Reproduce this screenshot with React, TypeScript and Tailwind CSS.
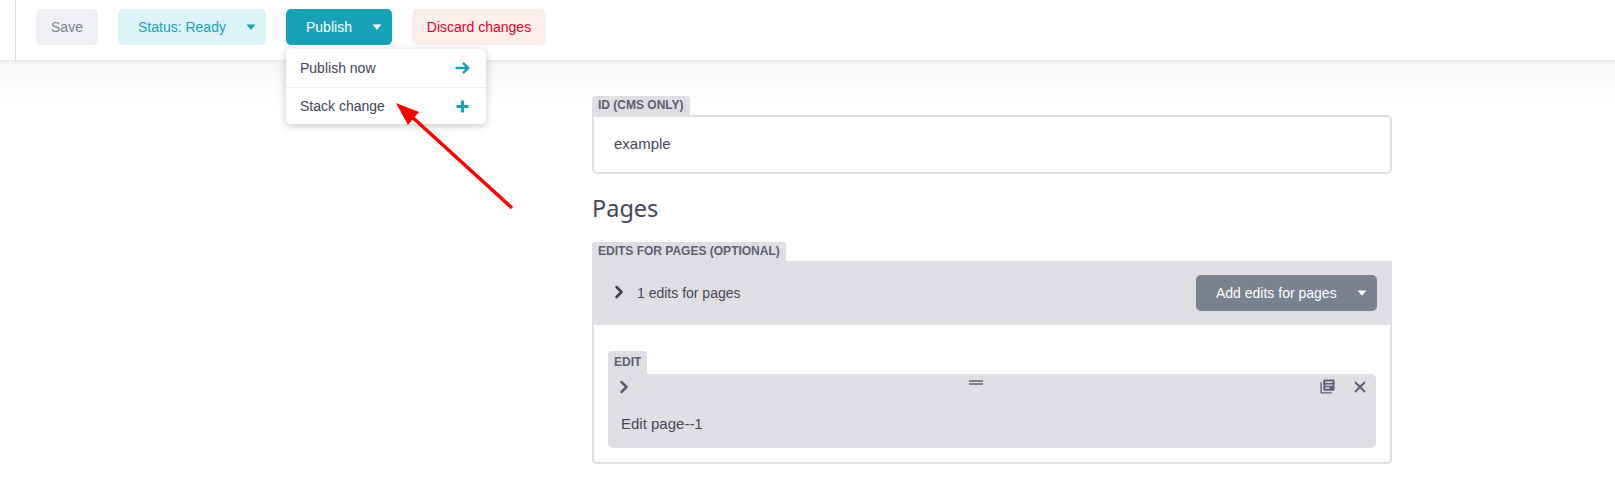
import React from 'react';
import { ChevronRight, X } from 'lucide-react';

const Caret = ({ className }: { className: string }) => (
  <svg viewBox="0 0 10 6" className={`w-[10px] h-[6px] ${className}`}>
    <path d="M0.5 0.5h9L5 5.7z" fill="currentColor" />
  </svg>
);

const Label = ({ children }: { children: React.ReactNode }) => (
  <div className="w-fit h-[19px] px-[6px] bg-[#dfdfe3] rounded-t-[3px] text-[12px] leading-[19px] font-bold text-[#5d5e73]">
    {children}
  </div>
);

export default function App() {
  return (
    <div className="relative w-[1615px] h-[483px] overflow-hidden bg-white font-['Liberation_Sans',sans-serif] text-[14px] text-[#45465a]">
      {/* top toolbar */}
      <div className="relative z-10 h-[60px] bg-white shadow-[0_1px_4px_rgba(0,0,0,0.08)] pl-[15px]">
        <div className="h-full border-l border-[#dfdfe3] pl-[20px] pt-[9px] flex items-start">
          <button className="w-[62px] h-[36px] rounded-[5px] bg-[#eff0f4] text-[#798291]">Save</button>
          <button className="ml-[20px] w-[148px] h-[36px] rounded-[5px] bg-[#ddf5f9] text-[#17a2b8] flex items-center pl-[20px]">
            Status: Ready
            <Caret className="ml-auto mr-[10px] text-[#17a2b8]" />
          </button>
          <div className="relative ml-[20px]">
            <button className="w-[106px] h-[36px] rounded-[5px] bg-[#17a2b8] text-white flex items-center pl-[20px]">
              Publish
              <Caret className="ml-auto mr-[10px] text-white" />
            </button>
            <div className="absolute left-0 top-[40px] w-[200px] h-[75px] rounded-[5px] bg-white shadow-[0_2px_9px_rgba(0,0,0,0.22)]">
              <div className="h-[39px] pl-[14px] pr-[16px] border-b border-[#eff0f4] flex items-center justify-between">
                Publish now
                <svg viewBox="0 0 15 12" className="w-[15px] h-[12px] text-[#17a2b8]" fill="none" stroke="currentColor" strokeWidth="2.4">
                  <path d="M0.5 6h12.500M8 0.800 13.200 6 8 11.200" />
                </svg>
              </div>
              <div className="h-[36px] pl-[14px] pr-[16px] flex items-center justify-between">
                Stack change
                <svg viewBox="0 0 13 13" className="w-[13px] h-[13px] mr-[1px] text-[#17a2b8]" fill="none" stroke="currentColor" strokeWidth="3.2">
                  <path d="M6.500 0.500v12M0.500 6.500h12" />
                </svg>
              </div>
            </div>
          </div>
          <button className="ml-[20px] w-[134px] h-[36px] rounded-[5px] bg-[#fcefea] text-[#e4002b]">Discard changes</button>
        </div>
      </div>

      {/* editor column */}
      <div className="bg-gradient-to-b from-[#f5f5f5] to-white h-[44px]" />
      <div className="w-[800px] ml-[592px] -mt-[8px]">
        <Label>ID (CMS ONLY)</Label>
        <div className="h-[59px] border-2 border-[#dfdfe3] rounded-b-[5px] rounded-tr-[5px] flex items-center pl-[20px] text-[15px]">
          example
        </div>
        <h2 className="mt-[17px] h-[34px] text-[23.5px] leading-[34px] font-['Noto_Sans',sans-serif]">Pages</h2>
        <div className="mt-[17px]">
          <Label>EDITS FOR PAGES (OPTIONAL)</Label>
          <div className="h-[203px] border-2 border-t-0 border-[#dfdfe3] rounded-b-[5px]">
            <div className="h-[64px] -mx-[2px] bg-[#dfdfe3] flex items-center pl-[20px] pr-[15px] rounded-tr-[5px]">
              <ChevronRight className="w-[20px] h-[20px] -ml-[3px] -mt-[2px] text-[#3d3e50]" strokeWidth={3} />
              <span className="ml-[8px]">1 edits for pages</span>
              <button className="ml-auto w-[181px] h-[36px] rounded-[5px] bg-[#798291] text-white flex items-center pl-[20px]">
                Add edits for pages
                <Caret className="ml-auto mr-[10px] text-white" />
              </button>
            </div>
            <div className="pl-[14px] pr-[14px] pt-[26px]">
              <div className="w-fit h-[23px] px-[6px] bg-[#dfdfe3] rounded-t-[3px] text-[12px] leading-[23px] font-bold text-[#5d5e73]">
                EDIT
              </div>
              <div className="relative h-[74px] bg-[#dfdfe3] rounded-b-[5px] rounded-tr-[5px]">
                <ChevronRight className="absolute left-[6px] top-[3px] w-[20px] h-[20px] text-[#5d5e73]" strokeWidth={3} />
                <div className="absolute left-[361px] top-[6px] w-[14px] h-[5px] border-y-2 border-[#798291]" />
                <svg viewBox="0 0 24 24" className="absolute right-[40px] top-[4px] w-[17px] h-[17px] text-[#5d5e73]" fill="currentColor">
                  <path d="M4 6H2v14c0 1.100.9 2 2 2h14v-2H4V6zm16-4H8c-1.100 0-2 .9-2 2v12c0 1.100.9 2 2 2h12c1.100 0 2-.9 2-2V4c0-1.100-.9-2-2-2zm-1 9H9V9h10v2zm-4 4H9v-2h6v2zm4-8H9V5h10v2z" />
                </svg>
                <X className="absolute right-[7px] top-[4px] w-[18px] h-[18px] text-[#5d5e73]" strokeWidth={2.5} />
                <div className="absolute left-[13px] top-[41px] text-[15px] leading-[18px]">Edit page--1</div>
              </div>
            </div>
          </div>
        </div>
      </div>

      {/* annotation arrow */}
      <svg className="absolute left-0 top-0 z-20 pointer-events-none" width="1615" height="483">
        <path d="M512 208 411 116" stroke="#ff0000" strokeWidth="3.500" fill="none" />
        <path d="M396 103 419 112 408 125z" fill="#ff0000" />
      </svg>
    </div>
  );
}
